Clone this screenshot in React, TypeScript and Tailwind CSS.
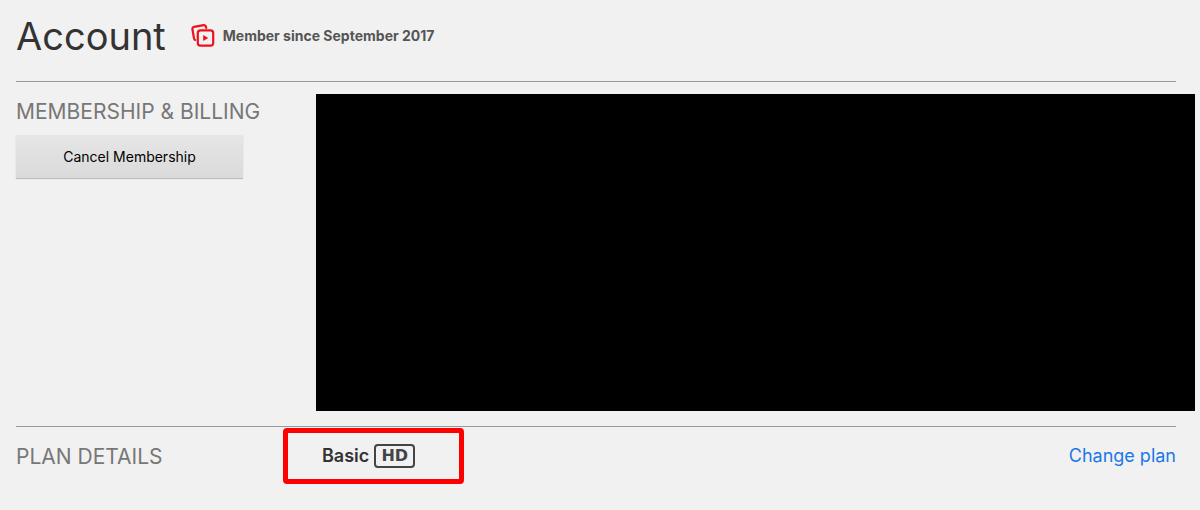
import React from 'react';

function MemberIcon() {
  return (
    <svg
      className="h-6 w-6 shrink-0"
      viewBox="0 0 24 24"
      fill="none"
      stroke="#f0101c"
      strokeWidth="2.2"
      strokeLinejoin="round"
      strokeLinecap="round"
      aria-hidden="true"
    >
      <path d="M4.1 15.9Q3.3 15.5 3 14.2L1.4 5.3Q1.1 3.2 3 2.8L12.6 1.2Q14.6.9 15 2.8L15.2 3.8" />
      <rect x="6.8" y="6.4" width="15.4" height="15.2" rx="2.6" />
      <path d="M12.2 11v6l5-3z" fill="#f0101c" stroke="none" />
    </svg>
  );
}

function HdBadge() {
  return (
    <span className="flex h-6 w-[41px] items-center justify-center rounded-[4px] border-2 border-[#444] font-['DejaVu_Sans',sans-serif] text-base leading-none font-bold text-[#444]">
      HD
    </span>
  );
}

function SectionTitle({ children }: { children: React.ReactNode }) {
  return <h2 className="text-[21px] leading-6 text-[#777]">{children}</h2>;
}

export default function App() {
  return (
    <div className="min-h-screen bg-[#f1f1f1] pr-6 pl-4 font-['Inter',sans-serif] text-[#333]">
      <header className="flex h-[81px] items-start gap-[25px] pt-3">
        <h1 className="text-[38px] leading-12">Account</h1>
        <div className="flex h-12 items-center gap-2">
          <MemberIcon />
          <p className="text-sm font-bold text-[#555]">Member since September 2017</p>
        </div>
      </header>

      <section className="flex border-t border-[#999] pt-3 pb-[15px]">
        <div className="w-[300px] shrink-0 pt-[6px]">
          <SectionTitle>MEMBERSHIP &amp; BILLING</SectionTitle>
          <button
            type="button"
            className="mt-[11px] h-[43px] w-[227px] bg-linear-to-b from-[#e6e6e6] to-[#dadada] text-sm text-black shadow-[0_1px_1px_rgba(0,0,0,0.2)]"
          >
            Cancel Membership
          </button>
        </div>
        <div className="-mr-[19px] h-[317px] flex-1 bg-black" />
      </section>

      <section className="flex items-start border-t border-[#999] pt-px">
        <div className="w-[267px] shrink-0 pt-[17px]">
          <SectionTitle>PLAN DETAILS</SectionTitle>
        </div>
        <div className="flex h-14 w-[181px] items-center gap-[5px] rounded-[4px] border-[5px] border-[#ff0000] pl-[34px]">
          <b className="text-lg leading-6 font-semibold">Basic</b>
          <HdBadge />
        </div>
        <a href="#change-plan" className="ml-auto pt-4 text-lg leading-6 text-[#1a78e8]">
          Change plan
        </a>
      </section>
    </div>
  );
}
